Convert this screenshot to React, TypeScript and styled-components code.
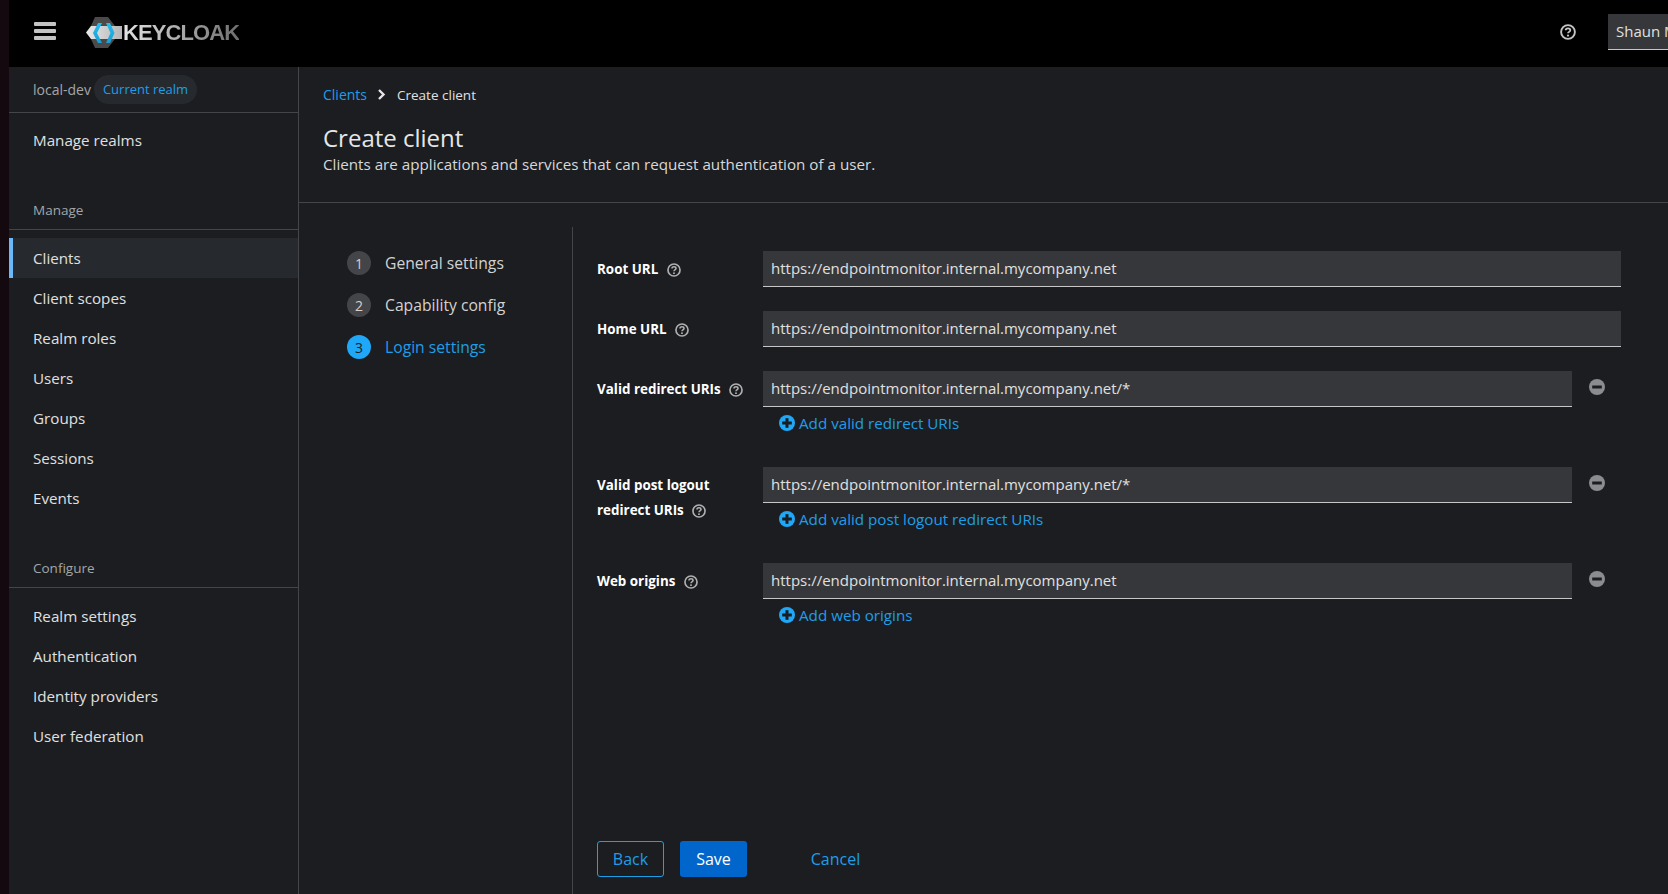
import styled, { createGlobalStyle } from "styled-components";

const GlobalStyle = createGlobalStyle`
    html, body {
        margin: 0;
        height: 100%;
        background: #14090f;
        overflow: hidden;
    }
    * {
        box-sizing: border-box;
    }
    #root {
        height: 100%;
    }
`

const FONT = `"Open Sans", "Noto Sans", sans-serif`
const LINK = "#1f9ee8"

const HelpIcon = ({ size = 14 }: { size?: number }) => (
    <svg width={size} height={size} viewBox="0 0 16 16" fill="none">
        <circle cx="8" cy="8" r="6.9" stroke="currentColor" strokeWidth="1.9" />
        <path d="M5.7 6.3c0-1.300 1.100-2 2.300-2s2.300.8 2.300 1.900c0 1.600-2.300 1.700-2.300 3.100" stroke="currentColor" strokeWidth="1.8" fill="none" />
        <circle cx="8" cy="11.6" r="1.100" fill="currentColor" />
    </svg>
)

const PlusIcon = () => (
    <svg width="16" height="16" viewBox="0 0 16 16">
        <circle cx="8" cy="8" r="8" fill="#1fa7f8" />
        <rect x="3.2" y="6.500" width="9.600" height="3" fill="#1b1d21" />
        <rect x="6.500" y="3.200" width="3" height="9.600" fill="#1b1d21" />
    </svg>
)

const MinusIcon = () => (
    <svg width="16" height="16" viewBox="0 0 16 16">
        <circle cx="8" cy="8" r="8" fill="#8b8c8f" />
        <rect x="3.200" y="6.500" width="9.600" height="3" fill="#1b1d21" />
    </svg>
)

const MenuIcon = () => (
    <svg width="22" height="18" viewBox="0 0 22 18" fill="#c4c4c4">
        <rect y="0" width="22" height="4" rx="1" />
        <rect y="7" width="22" height="4" rx="1" />
        <rect y="14" width="22" height="4" rx="1" />
    </svg>
)

const ChevronIcon = () => (
    <svg width="9" height="11" viewBox="0 0 9 11" fill="none">
        <path d="M2 1l4.500 4.500L2 10" stroke="#e6e6e6" strokeWidth="2.400" />
    </svg>
)

const Logo = () => (
    <svg width="37" height="32" viewBox="0 0 37 32">
        <defs>
            <linearGradient id="chev" x1="0" y1="0" x2="0" y2="1">
                <stop offset="0" stopColor="#22bdf0" />
                <stop offset="1" stopColor="#1a9fd4" />
            </linearGradient>
            <linearGradient id="band" x1="0" y1="0" x2="1" y2="0">
                <stop offset="0" stopColor="#e8e8e8" />
                <stop offset="1" stopColor="#b5b5b5" />
            </linearGradient>
        </defs>
        <path d="M9 0h13l12 15.500L22 31H9L2 15.500z" fill="#4a4a4a" />
        <path d="M0 15.500L5 9h31v13H5z" fill="url(#band)" />
        <path d="M12 6h4l-5 10 5 10h-4L7 16z" fill="url(#chev)" />
        <path d="M20 6h4l4.500 10L24 26h-4l4.500-10z" fill="url(#chev)" />
    </svg>
)

const sidebarManage = ["Clients", "Client scopes", "Realm roles", "Users", "Groups", "Sessions", "Events"]
const sidebarConfigure = ["Realm settings", "Authentication", "Identity providers", "User federation"]
const steps = ["General settings", "Capability config", "Login settings"]
const URL = "https://endpointmonitor.internal.mycompany.net"

export default function App() {
    return (
        <>
            <GlobalStyle />
            <Page>
                <Header>
                    <MenuButton><MenuIcon /></MenuButton>
                    <LogoWrap>
                        <Logo />
                        <LogoText>KEYCLOAK</LogoText>
                    </LogoWrap>
                    <HeaderHelp><HelpIcon size={16} /></HeaderHelp>
                    <UserToggle>Shaun Murphy</UserToggle>
                </Header>
                <Body>
                    <Sidebar>
                        <RealmRow>
                            <RealmName>local-dev</RealmName>
                            <RealmBadge>Current realm</RealmBadge>
                        </RealmRow>
                        <NavItem>Manage realms</NavItem>
                        <SectionTitle>Manage</SectionTitle>
                        {sidebarManage.map((item) => (
                            <NavItem key={item} $active={item === "Clients"}>{item}</NavItem>
                        ))}
                        <SectionTitle>Configure</SectionTitle>
                        {sidebarConfigure.map((item) => (
                            <NavItem key={item}>{item}</NavItem>
                        ))}
                    </Sidebar>
                    <Main>
                        <PageHead>
                            <Breadcrumb>
                                <Crumb>Clients</Crumb>
                                <ChevronIcon />
                                <CrumbCurrent>Create client</CrumbCurrent>
                            </Breadcrumb>
                            <Title>Create client</Title>
                            <Subtitle>Clients are applications and services that can request authentication of a user.</Subtitle>
                        </PageHead>
                        <Wizard>
                            <Steps>
                                {steps.map((step, i) => (
                                    <Step key={step} $current={i === 2}>
                                        <StepNumber $current={i === 2}>{i + 1}</StepNumber>
                                        {step}
                                    </Step>
                                ))}
                            </Steps>
                            <FormColumn>
                                <Form>
                                    <FieldRow>
                                        <Label>Root URL <LabelHelp><HelpIcon /></LabelHelp></Label>
                                        <Input>{URL}</Input>
                                    </FieldRow>
                                    <FieldRow>
                                        <Label>Home URL <LabelHelp><HelpIcon /></LabelHelp></Label>
                                        <Input>{URL}</Input>
                                    </FieldRow>
                                    <FieldRow $multi>
                                        <Label>Valid redirect URIs <LabelHelp><HelpIcon /></LabelHelp></Label>
                                        <div>
                                            <MultiInput>
                                                <Input>{URL}/*</Input>
                                                <RemoveButton><MinusIcon /></RemoveButton>
                                            </MultiInput>
                                            <AddLink><PlusIcon />Add valid redirect URIs</AddLink>
                                        </div>
                                    </FieldRow>
                                    <FieldRow $multi>
                                        <Label>Valid post logout<br />redirect URIs <LabelHelp><HelpIcon /></LabelHelp></Label>
                                        <div>
                                            <MultiInput>
                                                <Input>{URL}/*</Input>
                                                <RemoveButton><MinusIcon /></RemoveButton>
                                            </MultiInput>
                                            <AddLink><PlusIcon />Add valid post logout redirect URIs</AddLink>
                                        </div>
                                    </FieldRow>
                                    <FieldRow $multi>
                                        <Label>Web origins <LabelHelp><HelpIcon /></LabelHelp></Label>
                                        <div>
                                            <MultiInput>
                                                <Input>{URL}</Input>
                                                <RemoveButton><MinusIcon /></RemoveButton>
                                            </MultiInput>
                                            <AddLink><PlusIcon />Add web origins</AddLink>
                                        </div>
                                    </FieldRow>
                                </Form>
                                <Footer>
                                    <BackButton>Back</BackButton>
                                    <SaveButton>Save</SaveButton>
                                    <CancelButton>Cancel</CancelButton>
                                </Footer>
                            </FormColumn>
                        </Wizard>
                    </Main>
                </Body>
            </Page>
        </>
    );
}

const Page = styled.div`
    margin-left: 9px;
    height: 894px;
    display: flex;
    flex-direction: column;
    background: #1b1d21;
    font-family: ${FONT};
    font-size: 15px;
    color: #e0e0e0;
    overflow: hidden;
`

const Header = styled.header`
    height: 67px;
    flex: none;
    background: #000;
    display: flex;
    align-items: center;
    padding-left: 25px;
`

const MenuButton = styled.div`
    width: 22px;
    height: 18px;
    display: flex;
    margin-top: -5px;
    margin-right: 30px;
`

const LogoWrap = styled.div`
    display: flex;
    align-items: center;
    margin-top: -1px;
`

const LogoText = styled.span`
    font-family: "Liberation Sans", sans-serif;
    font-weight: 700;
    font-size: 22px;
    letter-spacing: -0.9px;
    background: linear-gradient(90deg, #e4e4e4, #6e6e6e);
    -webkit-background-clip: text;
    background-clip: text;
    color: transparent;
`

const HeaderHelp = styled.div`
    margin-left: auto;
    margin-top: -3px;
    color: #c4c4c4;
    display: flex;
`

const UserToggle = styled.div`
    width: 140px;
    height: 36px;
    margin-left: 32px;
    margin-right: -80px;
    margin-top: -3px;
    flex: none;
    padding: 0 8px;
    background: #36373a;
    border-bottom: 1px solid #c7c7c7;
    line-height: 35px;
    white-space: nowrap;
`

const Body = styled.div`
    flex: 1;
    display: flex;
    min-height: 0;
`

const Sidebar = styled.nav`
    width: 290px;
    flex: none;
    border-right: 1px solid #444548;
`

const RealmRow = styled.div`
    height: 46px;
    display: flex;
    align-items: center;
    gap: 3px;
    padding-left: 24px;
    border-bottom: 1px solid #444548;
    font-size: 14px;
    margin-bottom: 7px;
`

const RealmName = styled.span`
    color: #a5a6a8;
`

const RealmBadge = styled.span`
    background: #26292d;
    color: ${LINK};
    height: 29px;
    line-height: 29px;
    padding: 0 9px;
    border-radius: 15px;
    font-size: 13px;
`

const NavItem = styled.div<{ $active?: boolean }>`
    height: 40px;
    line-height: 40px;
    font-size: 15.2px;
    padding-left: ${(p) => (p.$active ? "20px" : "24px")};
    background: ${(p) => (p.$active ? "#26292d" : "transparent")};
    border-left: ${(p) => (p.$active ? `4px solid #6ab8f7` : "none")};
`

const SectionTitle = styled.div`
    height: 48px;
    margin-top: 22px;
    margin-bottom: 8px;
    padding: 19px 0 0 24px;
    font-size: 13.5px;
    color: #a5a6a8;
    border-bottom: 1px solid #444548;
    line-height: 18px;
`

const Main = styled.main`
    flex: 1;
    min-width: 0;
    display: flex;
    flex-direction: column;
`

const PageHead = styled.div`
    height: 136px;
    flex: none;
    padding: 18px 24px 0;
    border-bottom: 1px solid #444548;
`

const Breadcrumb = styled.div`
    display: flex;
    align-items: center;
    gap: 9px;
    font-size: 13.5px;
    height: 19px;
`

const Crumb = styled.span`
    color: ${LINK};
    font-size: 14px;
    margin-right: 1px;
`

const CrumbCurrent = styled.span`
    margin-left: 2px;
`

const Title = styled.h1`
    margin: 19px 0 0;
    font-size: 24px;
    font-weight: 500;
    line-height: 30px;
    color: #e6e6e6;
`

const Subtitle = styled.p`
    margin: 0;
    font-size: 15.2px;
    line-height: 22px;
    color: #d8d8d8;
`

const Wizard = styled.div`
    flex: 1;
    display: flex;
    min-height: 0;
    padding-top: 24px;
`

const Steps = styled.div`
    width: 274px;
    flex: none;
    padding: 24px 0 0 48px;
    border-right: 1px solid #444548;
    display: flex;
    flex-direction: column;
    gap: 18px;
    font-size: 15.7px;
`

const Step = styled.div<{ $current?: boolean }>`
    display: flex;
    align-items: center;
    gap: 14px;
    height: 24px;
    color: ${(p) => (p.$current ? LINK : "#d2d2d2")};
`

const StepNumber = styled.span<{ $current?: boolean }>`
    width: 24px;
    height: 24px;
    border-radius: 50%;
    display: flex;
    align-items: center;
    justify-content: center;
    font-size: 14px;
    background: ${(p) => (p.$current ? "#1fa7f8" : "#444548")};
    color: ${(p) => (p.$current ? "#1b1d21" : "#d2d2d2")};
`

const FormColumn = styled.div`
    flex: 1;
    min-width: 0;
    display: flex;
    flex-direction: column;
    justify-content: space-between;
    padding: 24px 47px 17px 24px;
`

const Form = styled.div`
    display: flex;
    flex-direction: column;
`

const FieldRow = styled.div<{ $multi?: boolean }>`
    display: grid;
    grid-template-columns: 166px 1fr;
    margin-bottom: 24px;
    min-height: ${(p) => (p.$multi ? "72px" : "36px")};
`

const Label = styled.div`
    font-size: 13.4px;
    font-weight: 700;
    color: #fff;
    line-height: 25px;
    padding-top: 6px;
`

const LabelHelp = styled.span`
    display: inline-flex;
    vertical-align: -3px;
    margin-left: 5px;
    color: #b0b0b0;
`

const Input = styled.div`
    flex: 1;
    height: 36px;
    padding: 0 8px;
    background: #36373a;
    border-bottom: 1px solid #c7c7c7;
    line-height: 35px;
    color: #e0e0e0;
`

const MultiInput = styled.div`
    display: flex;
    align-items: center;
`

const RemoveButton = styled.div`
    width: 49px;
    flex: none;
    display: flex;
    justify-content: center;
    margin-top: -4px;
`

const AddLink = styled.div`
    display: flex;
    align-items: center;
    gap: 4px;
    height: 32px;
    padding-left: 16px;
    color: ${LINK};
    font-size: 15.2px;
`

const Footer = styled.div`
    display: flex;
    align-items: center;
`

const BaseButton = styled.button`
    height: 36px;
    width: 67px;
    border-radius: 3px;
    font-family: ${FONT};
    font-size: 16px;
    padding: 0;
    background: transparent;
    border: none;
`

const BackButton = styled(BaseButton)`
    border: 1px solid ${LINK};
    color: ${LINK};
`

const SaveButton = styled(BaseButton)`
    background: #0066cc;
    color: #fff;
    margin-left: 16px;
`

const CancelButton = styled(BaseButton)`
    color: ${LINK};
    margin-left: 55px;
`
